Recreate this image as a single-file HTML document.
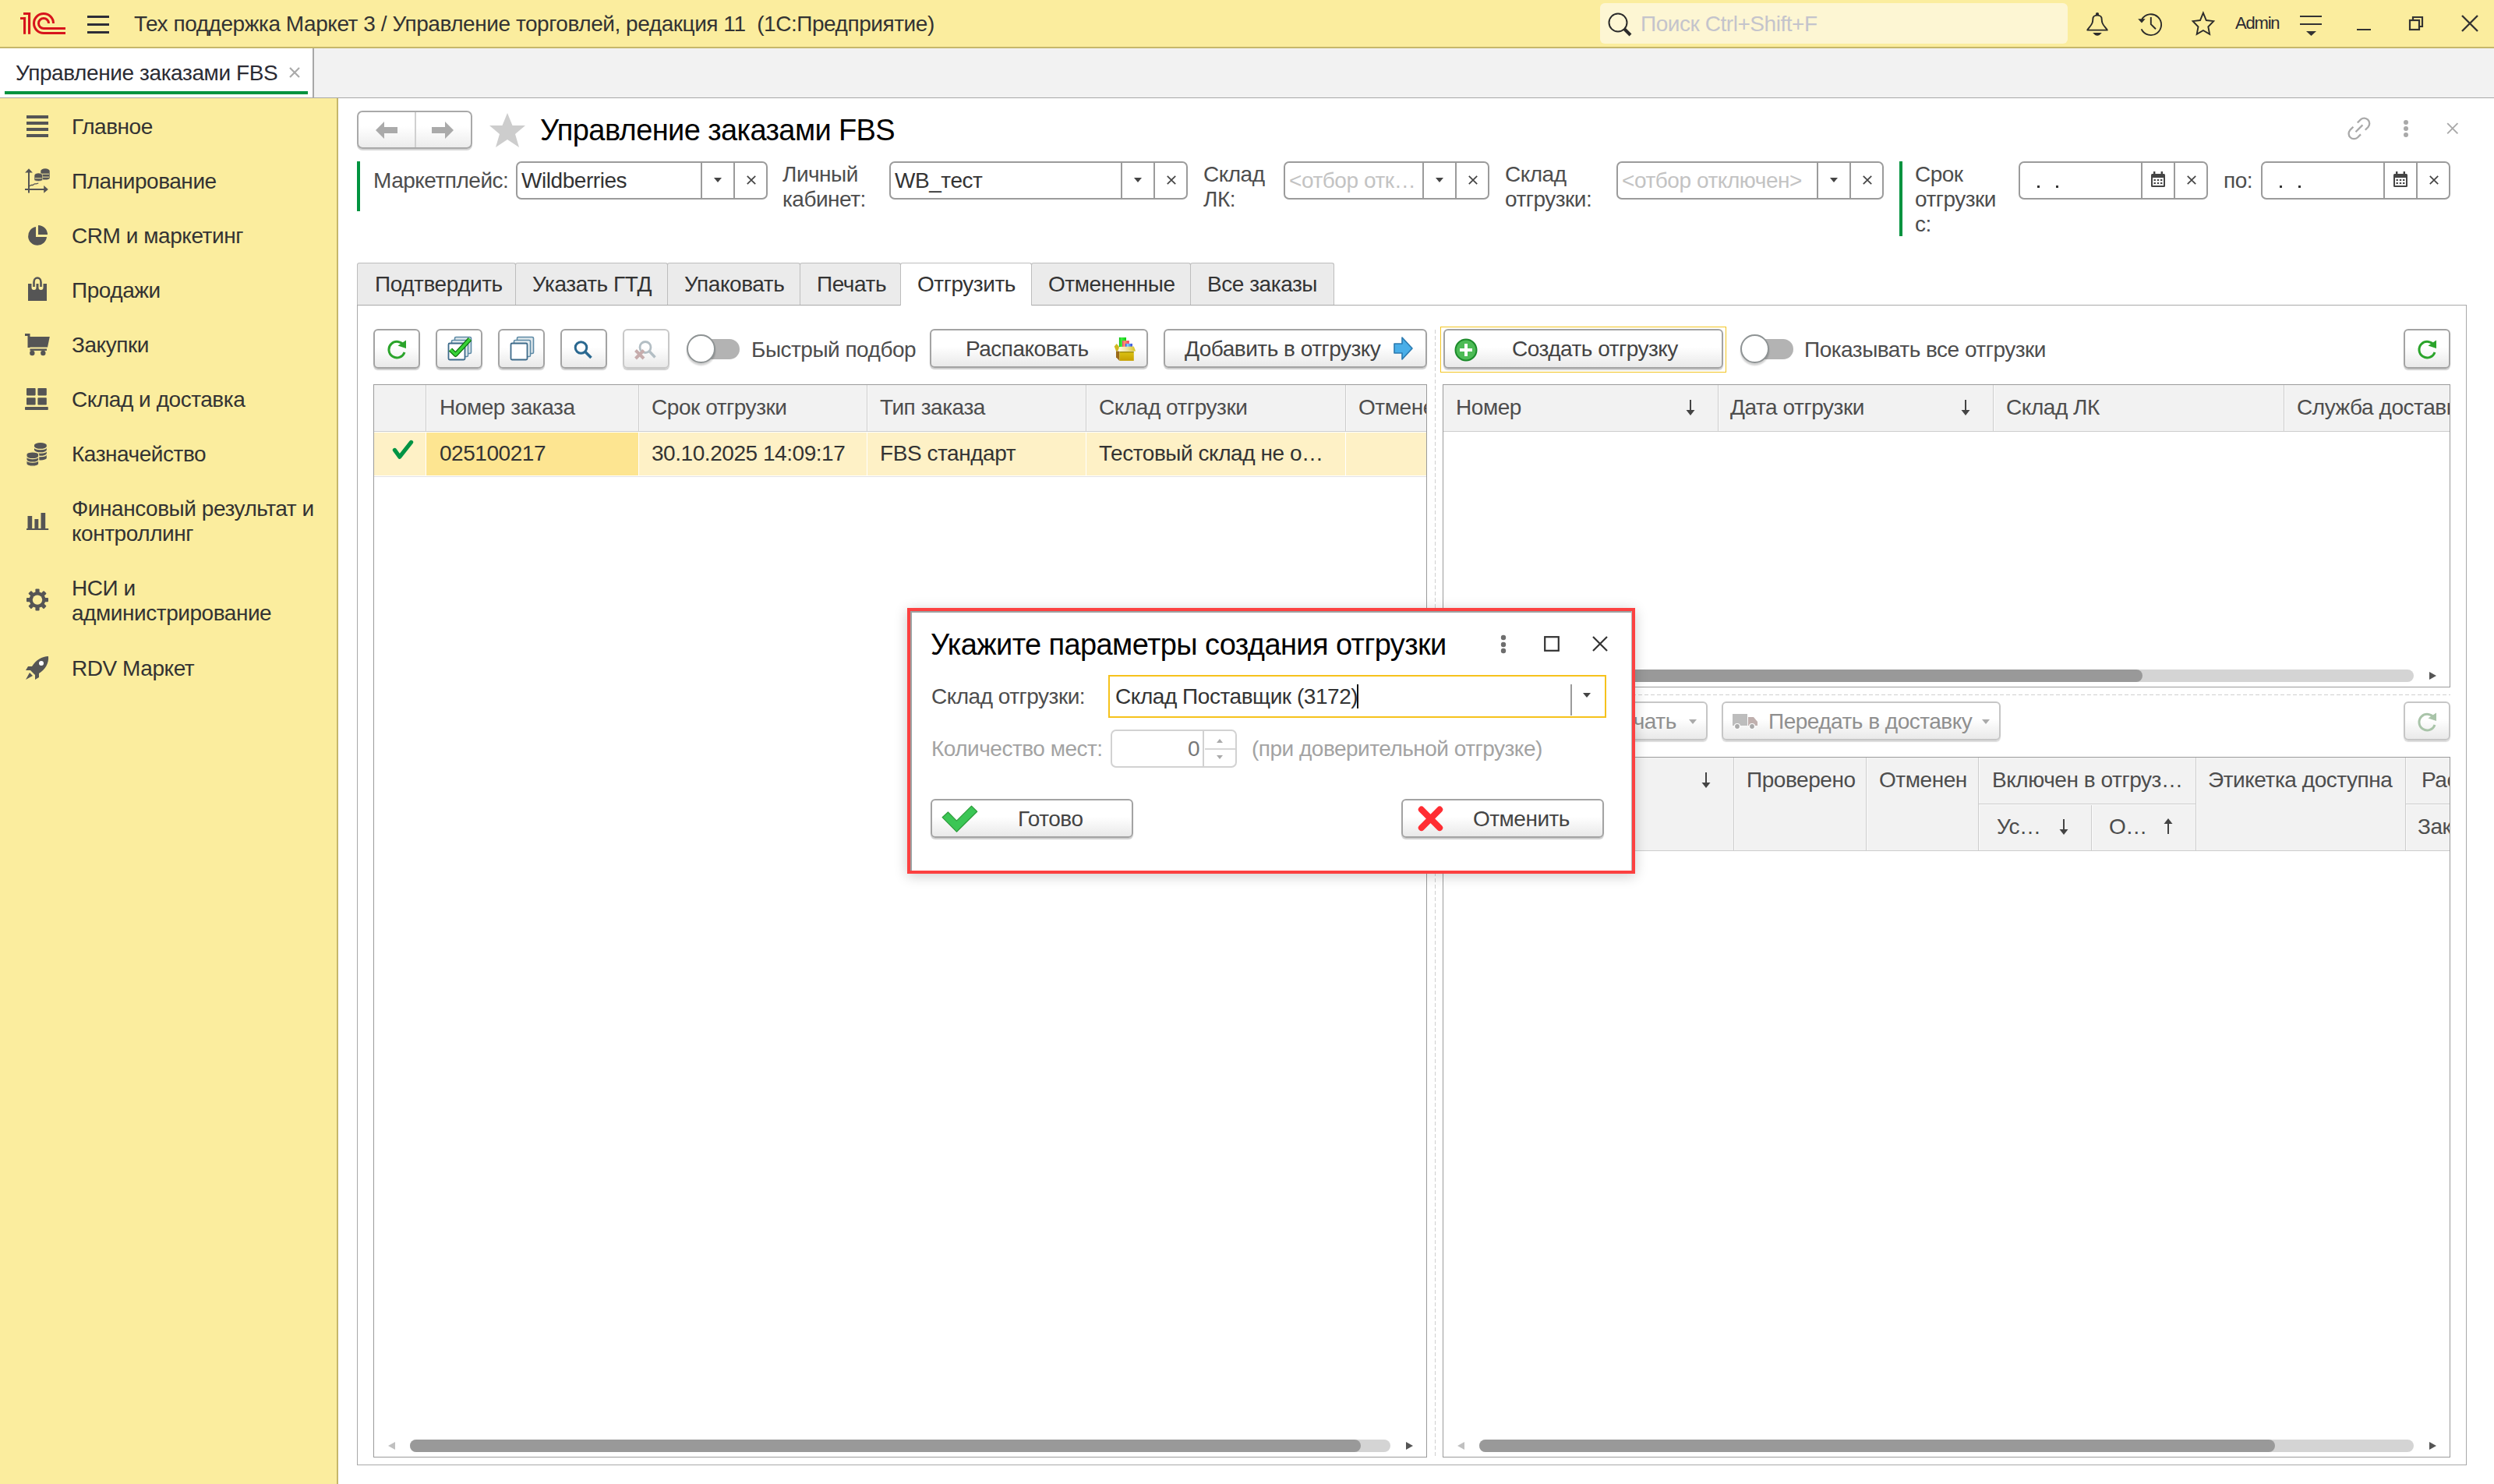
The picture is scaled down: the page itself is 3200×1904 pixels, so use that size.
<!DOCTYPE html>
<html><head><meta charset="utf-8">
<style>
*{box-sizing:border-box}
html,body{margin:0;padding:0}
body{width:3200px;height:1904px;overflow:hidden;position:relative;background:#fff;font-family:"Liberation Sans",sans-serif;color:#333}
.a{position:absolute}
.t{position:absolute;white-space:pre}
svg{position:absolute;overflow:visible}
</style></head><body>
<div class="a" style="left:0px;top:0px;width:3200px;height:60px;background:#fbed9e"></div>
<div class="a" style="left:0px;top:60px;width:3200px;height:2px;background:#c6b76b"></div>
<svg style="left:26px;top:16px" width="58" height="28" viewBox="0 0 58 28"><g fill="#d7141c"><rect x="4" y="0" width="9.1" height="3"/><rect x="10" y="0" width="3.1" height="27.8"/><rect x="4" y="6.1" width="3.05" height="21.7"/><rect x="0" y="6.1" width="7.05" height="2.9"/></g>
<g fill="none" stroke="#d7141c" stroke-width="3"><path d="M42.5 14 A12.5 12.5 0 1 0 30 26.5 L58 26.5"/><path d="M36.5 14 A6.5 6.5 0 1 0 30 20.5 L58 20.5"/></g></svg>
<div class="a" style="left:112px;top:20px;width:28px;height:2.5px;background:#2d2d37"></div>
<div class="a" style="left:112px;top:30px;width:28px;height:2.5px;background:#2d2d37"></div>
<div class="a" style="left:112px;top:40px;width:28px;height:2.5px;background:#2d2d37"></div>
<div class="t" style="left:172px;top:15px;font-size:28px;line-height:32px;letter-spacing:-0.45px;color:#333;">Тех поддержка Маркет 3 / Управление торговлей, редакция 11  (1С:Предприятие)</div>
<div class="a" style="left:2053px;top:4px;width:600px;height:52px;background:#fdf6d3;border-radius:6px"></div>
<svg style="left:2062px;top:16px" width="34" height="32" viewBox="0 0 34 32"><circle cx="14" cy="13" r="11.5" fill="none" stroke="#2b2b2b" stroke-width="2"/><path d="M22 21 L30 29" stroke="#2b2b2b" stroke-width="4"/></svg>
<div class="t" style="left:2105px;top:15px;font-size:28px;line-height:32px;letter-spacing:-0.45px;color:#c4c4cc;">Поиск Ctrl+Shift+F</div>
<svg style="left:2670px;top:8px" width="40" height="44" viewBox="0 0 40 44"><g transform="translate(-2670 -8)"><circle cx="2691" cy="18" r="2.1" fill="#2b2b2b"/>
<path d="M2678.2 38.6 C2679.5 35.8 2683 33.5 2684.5 29.5 C2685.5 27 2685.2 24.2 2685.6 22.6 C2686.4 20.6 2688.5 19.6 2691 19.6 C2693.5 19.6 2695.6 20.6 2696.4 22.6 C2696.8 24.2 2696.5 27 2697.5 29.5 C2699 33.5 2702.5 35.8 2703.8 38.6 Z" fill="none" stroke="#2b2b2b" stroke-width="1.9" stroke-linejoin="round"/>
<path d="M2685.2 42 L2696.8 42 L2693.8 45 Q2691 46.6 2688.2 45 Z" fill="#2b2b2b"/></g></svg>
<svg style="left:2740px;top:12px" width="40" height="40" viewBox="0 0 40 40"><g transform="translate(-2740 -12)"><path d="M2748.2 24.8 A13.4 13.4 0 1 1 2747.6 37.4" fill="none" stroke="#2b2b2b" stroke-width="1.9"/>
<path d="M2743.2 24.2 L2752.6 24.2 L2748 29.5 Z" fill="#2b2b2b"/>
<path d="M2759.8 22 L2759.8 31.2 L2766 37.2" fill="none" stroke="#2b2b2b" stroke-width="1.9"/></g></svg>
<svg style="left:2808px;top:12px" width="40" height="40" viewBox="0 0 40 40"><g transform="translate(-2808 -12)"><path d="M2826.9 16.6 L2830.8 26 L2840.2 27.1 L2833.3 34.3 L2835.1 43.8 L2826.9 39 L2818.7 43.8 L2820.5 34.3 L2813.6 27.1 L2823 26 Z" fill="none" stroke="#2b2b2b" stroke-width="1.9" stroke-linejoin="miter"/></g></svg>
<div class="t" style="left:2868px;top:14px;font-size:22px;line-height:32px;letter-spacing:-1.2px;color:#2b2b33;">Admin</div>
<div class="a" style="left:2951px;top:20px;width:28px;height:2px;background:#333"></div>
<div class="a" style="left:2951px;top:30px;width:28px;height:2px;background:#333"></div>
<svg style="left:2959px;top:40px" width="13" height="6" viewBox="0 0 13 6"><path d="M0 0 L13 0 L6.5 6 Z" fill="#333"/></svg>
<div class="a" style="left:3024px;top:37px;width:18px;height:2px;background:#333"></div>
<svg style="left:3091px;top:20px" width="20" height="20" viewBox="0 0 20 20"><rect x="1" y="6" width="12" height="12" fill="none" stroke="#333" stroke-width="2.2"/><path d="M5 6 L5 2 L17 2 L17 14 L13 14" fill="none" stroke="#333" stroke-width="2.2"/></svg>
<svg style="left:3158px;top:19px" width="22" height="22" viewBox="0 0 22 22"><path d="M1 1 L21 21 M21 1 L1 21" stroke="#333" stroke-width="2.4"/></svg>
<div class="a" style="left:0px;top:62px;width:3200px;height:63px;background:#f2f2f2"></div>
<div class="a" style="left:0px;top:125px;width:3200px;height:1px;background:#a8a8a8"></div>
<div class="a" style="left:0px;top:62px;width:401px;height:63px;background:#fff"></div>
<div class="a" style="left:401px;top:62px;width:2px;height:64px;background:#a8a8a8"></div>
<div class="a" style="left:6px;top:117px;width:389px;height:4px;background:#00933f"></div>
<div class="t" style="left:20px;top:78px;font-size:28px;line-height:32px;letter-spacing:-0.4px;color:#2b2b33;">Управление заказами FBS</div>
<svg style="left:371px;top:86px" width="14" height="14" viewBox="0 0 14 14"><path d="M1 1 L13 13 M13 1 L1 13" stroke="#aaa" stroke-width="2.2"/></svg>
<div class="a" style="left:0px;top:126px;width:432px;height:1778px;background:#fbed9e"></div>
<div class="a" style="left:432px;top:126px;width:2px;height:1778px;background:#c6b76b"></div>
<div class="t" style="left:92px;top:147px;font-size:28px;line-height:32px;letter-spacing:-0.45px;color:#333;">Главное</div>
<div class="t" style="left:92px;top:217px;font-size:28px;line-height:32px;letter-spacing:-0.45px;color:#333;">Планирование</div>
<div class="t" style="left:92px;top:287px;font-size:28px;line-height:32px;letter-spacing:-0.45px;color:#333;">CRM и маркетинг</div>
<div class="t" style="left:92px;top:357px;font-size:28px;line-height:32px;letter-spacing:-0.45px;color:#333;">Продажи</div>
<div class="t" style="left:92px;top:427px;font-size:28px;line-height:32px;letter-spacing:-0.45px;color:#333;">Закупки</div>
<div class="t" style="left:92px;top:497px;font-size:28px;line-height:32px;letter-spacing:-0.45px;color:#333;">Склад и доставка</div>
<div class="t" style="left:92px;top:567px;font-size:28px;line-height:32px;letter-spacing:-0.45px;color:#333;">Казначейство</div>
<div class="t" style="left:92px;top:637px;font-size:28px;line-height:32px;letter-spacing:-0.45px;color:#333;">Финансовый результат и</div>
<div class="t" style="left:92px;top:669px;font-size:28px;line-height:32px;letter-spacing:-0.45px;color:#333;">контроллинг</div>
<div class="t" style="left:92px;top:739px;font-size:28px;line-height:32px;letter-spacing:-0.45px;color:#333;">НСИ и</div>
<div class="t" style="left:92px;top:771px;font-size:28px;line-height:32px;letter-spacing:-0.45px;color:#333;">администрирование</div>
<div class="t" style="left:92px;top:842px;font-size:28px;line-height:32px;letter-spacing:-0.45px;color:#333;">RDV Маркет</div>
<div class="a" style="left:34px;top:148px;width:28px;height:4px;background:#555"></div>
<div class="a" style="left:34px;top:156px;width:28px;height:4px;background:#555"></div>
<div class="a" style="left:34px;top:164px;width:28px;height:4px;background:#555"></div>
<div class="a" style="left:34px;top:172px;width:28px;height:4px;background:#555"></div>
<svg style="left:25px;top:210px" width="50" height="50" viewBox="0 0 50 50"><g transform="translate(-25 -210)">
<rect x="36" y="219" width="2" height="28.5" fill="#555"/><path d="M32.1 221.6 L37 216.2 L41.9 221.6 Z" fill="#555"/>
<rect x="32" y="242" width="26" height="2" fill="#555"/><path d="M56.2 238 L61.8 243 L56.2 247.8 Z" fill="#555"/>
<path d="M37.5 239 L40 237.5 L42 237.5 L44.5 235.8 L46.5 235.8 L49.3 235" fill="none" stroke="#555" stroke-width="1.3"/>
<path d="M52.3 219.5 A5.7 3.3 0 0 1 63.7 219.5 L63.7 228.5 A5.7 2 0 0 1 52.3 228.5 Z" fill="#555"/>
<rect x="53" y="222.6" width="10" height="1.4" fill="#c9c08a"/><rect x="53" y="226.5" width="10" height="1.4" fill="#c9c08a"/>
<path d="M44 225 A5.3 3 0 0 1 54.6 225 L54.6 230.5 A5.3 2 0 0 1 44 230.5 Z" fill="#555" stroke="#fbed9e" stroke-width="0.6"/>
<rect x="45" y="228" width="8.6" height="1.4" fill="#c9c08a"/>
</g></svg>
<svg style="left:34px;top:288px" width="28" height="28" viewBox="0 0 28 28"><path d="M12 3 A12 12 0 1 0 26 16 L12 16 Z" fill="#555"/><path d="M15 1 A12 12 0 0 1 27 13 L15 13 Z" fill="#555"/></svg>
<svg style="left:0px;top:340px" width="70" height="60" viewBox="0 0 70 60"><g transform="translate(0 -340)"><path d="M36 364 L60 364 L60 386 L36 386 Z" fill="#555"/>
<path d="M43.5 369 L43.5 362 A4.5 5.5 0 0 1 52.5 362 L52.5 369" fill="none" stroke="#fbed9e" stroke-width="6" stroke-linecap="round"/>
<path d="M43.5 368 L43.5 362 A4.5 5.5 0 0 1 52.5 362 L52.5 368" fill="none" stroke="#555" stroke-width="2.6"/></g></svg>
<svg style="left:0px;top:420px" width="70" height="50" viewBox="0 0 70 50"><g transform="translate(0 -420)"><path d="M32 429.5 L37 429.5 L37 446" fill="none" stroke="#555" stroke-width="3"/>
<path d="M36 432 L63.8 432 L61 445.5 L36 445.5 Z" fill="#555"/>
<rect x="38.5" y="447.5" width="21.5" height="2.4" fill="#555"/>
<circle cx="41.3" cy="453" r="3.2" fill="#555"/><circle cx="55.3" cy="453" r="3.2" fill="#555"/></g></svg>
<svg style="left:25px;top:490px" width="50" height="50" viewBox="0 0 50 50"><g transform="translate(-25 -490)" fill="#555"><rect x="34" y="498" width="11.6" height="9.4" rx="0.8"/><rect x="48.4" y="498" width="11.4" height="9.4" rx="0.8"/><rect x="34" y="510.2" width="11.6" height="9.4" rx="0.8"/><rect x="48.4" y="510.2" width="11.4" height="9.4" rx="0.8"/><rect x="32" y="522" width="29.8" height="4" rx="0.8"/></g></svg>
<svg style="left:25px;top:560px" width="50" height="45" viewBox="0 0 50 45"><g transform="translate(-25 -560)"><path d="M44.0 571 A7.9 3 0 0 1 59.8 571 L59.8 587.5 A7.9 3 0 0 1 44.0 587.5 Z" fill="#555"/><path d="M44.0 573.5 A7.9 3 0 0 0 59.8 573.5" fill="none" stroke="#fbed9e" stroke-width="1.3"/><path d="M44.0 578 A7.9 3 0 0 0 59.8 578" fill="none" stroke="#fbed9e" stroke-width="1.3"/><path d="M44.0 582.5 A7.9 3 0 0 0 59.8 582.5" fill="none" stroke="#fbed9e" stroke-width="1.3"/><path d="M33.9 583 A7.9 3.2 0 0 1 49.7 583 L49.7 595 A7.9 3.2 0 0 1 33.9 595 Z" fill="#555" stroke="#fbed9e" stroke-width="1.2"/><path d="M33.9 585.5 A7.9 3.2 0 0 0 49.7 585.5" fill="none" stroke="#fbed9e" stroke-width="1.3"/><path d="M33.9 590 A7.9 3.2 0 0 0 49.7 590" fill="none" stroke="#fbed9e" stroke-width="1.3"/></g></svg>
<svg style="left:25px;top:650px" width="50" height="40" viewBox="0 0 50 40"><g transform="translate(-25 -650)" fill="#555"><rect x="35.5" y="662" width="5.7" height="16.5"/><rect x="44.4" y="666" width="4.9" height="12.5"/><rect x="52.5" y="658" width="5.7" height="20.5"/><rect x="34" y="678" width="28.2" height="2"/></g></svg>
<svg style="left:25px;top:750px" width="50" height="40" viewBox="0 0 50 40"><g transform="translate(23 19.6)"><circle r="10.4" fill="#555"/><rect x="-2.6" y="-14" width="5.2" height="6" rx="1" fill="#555" transform="rotate(0)"/><rect x="-2.6" y="-14" width="5.2" height="6" rx="1" fill="#555" transform="rotate(45)"/><rect x="-2.6" y="-14" width="5.2" height="6" rx="1" fill="#555" transform="rotate(90)"/><rect x="-2.6" y="-14" width="5.2" height="6" rx="1" fill="#555" transform="rotate(135)"/><rect x="-2.6" y="-14" width="5.2" height="6" rx="1" fill="#555" transform="rotate(180)"/><rect x="-2.6" y="-14" width="5.2" height="6" rx="1" fill="#555" transform="rotate(225)"/><rect x="-2.6" y="-14" width="5.2" height="6" rx="1" fill="#555" transform="rotate(270)"/><rect x="-2.6" y="-14" width="5.2" height="6" rx="1" fill="#555" transform="rotate(315)"/><circle r="6.2" fill="#fbed9e"/></g></svg>
<svg style="left:32px;top:841px" width="32" height="32" viewBox="0 0 32 32"><path d="M30 1 C22 1 14 6 9 14 L4 14 L1 19 L7 19 L13 25 L13 31 L18 28 L18 23 C26 18 31 10 30 1 Z" fill="#555"/><circle cx="21" cy="10" r="3" fill="#fff"/><path d="M6 22 L1 31 L10 26 Z" fill="#555"/></svg>
<div class="a" style="left:458px;top:142px;width:148px;height:49px;border:2px solid #a9a9a9;border-radius:7px;background:linear-gradient(#fff 40%,#ececec);box-shadow:0 2px 0 #d5d5d5"></div>
<div class="a" style="left:532px;top:144px;width:2px;height:45px;background:#d0d0d0"></div>
<svg style="left:482px;top:156px" width="28" height="22" viewBox="0 0 28 22"><path d="M0 11 L11 0 L11 7 L28 7 L28 15 L11 15 L11 22 Z" fill="#aaa"/></svg>
<svg style="left:554px;top:156px" width="28" height="22" viewBox="0 0 28 22"><path d="M28 11 L17 0 L17 7 L0 7 L0 15 L17 15 L17 22 Z" fill="#aaa"/></svg>
<svg style="left:628px;top:145px" width="46" height="44" viewBox="0 0 46 44"><path d="M23 0 L29.5 16 L46 16 L33 27 L38 44 L23 34 L8 44 L13 27 L0 16 L16.5 16 Z" fill="#cdcdcd"/></svg>
<div class="t" style="left:693px;top:145px;font-size:38px;line-height:44px;letter-spacing:-0.6px;color:#000;">Управление заказами FBS</div>
<svg style="left:3000px;top:140px" width="60" height="50" viewBox="0 0 60 50"><g transform="translate(-3000 -140)" fill="none" stroke="#a9a9a9" stroke-width="2.3"><path d="M3024.8 157.5 L3028.9 153.4 A6.8 6.8 0 0 1 3038.5 163 L3034.8 166.7"/><path d="M3019.4 162.8 L3015.3 166.9 A6.8 6.8 0 0 0 3024.9 176.5 L3029 172.4"/><path d="M3022.5 169.3 L3031.4 160.4"/></g></svg>
<svg style="left:3075px;top:148px" width="24" height="34" viewBox="0 0 24 34"><g transform="translate(-3075 -148)" fill="#a9a9a9"><circle cx="3087" cy="157" r="3"/><circle cx="3087" cy="165" r="3"/><circle cx="3087" cy="173" r="3"/></g></svg>
<svg style="left:3139px;top:157px" width="16" height="16" viewBox="0 0 16 16"><path d="M1.2 1.2 L14.4 14.4 M14.4 1.2 L1.2 14.4" stroke="#a9a9a9" stroke-width="1.9"/></svg>
<div class="a" style="left:458px;top:207px;width:4px;height:64px;background:#00933f"></div>
<div class="a" style="left:2437px;top:207px;width:4px;height:96px;background:#00933f"></div>
<div class="t" style="left:479px;top:216px;font-size:28px;line-height:32px;letter-spacing:-0.5px;color:#4d4d4d;">Маркетплейс:</div>
<div class="a" style="left:662px;top:207px;width:323px;height:49px;border:2px solid #9b9b9b;border-radius:7px;background:#fff"></div>
<div class="a" style="left:899px;top:209px;width:2px;height:45px;background:#9b9b9b"></div>
<div class="a" style="left:941px;top:209px;width:2px;height:45px;background:#9b9b9b"></div>
<div class="t" style="left:669px;top:216px;font-size:28px;line-height:32px;letter-spacing:-0.45px;color:#333;">Wildberries</div>
<svg style="left:916.0px;top:228px" width="10" height="7" viewBox="0 0 10 7"><path d="M0 0 L10 0 L5 6 Z" fill="#444"/></svg>
<svg style="left:957.5px;top:225px" width="12" height="12" viewBox="0 0 12 12"><path d="M0.8 0.8 L11.2 11.2 M11.2 0.8 L0.8 11.2" stroke="#444" stroke-width="1.7"/></svg>
<div class="t" style="left:1004px;top:208px;font-size:28px;line-height:32px;letter-spacing:-0.5px;color:#4d4d4d;">Личный</div>
<div class="t" style="left:1004px;top:240px;font-size:28px;line-height:32px;letter-spacing:-0.5px;color:#4d4d4d;">кабинет:</div>
<div class="a" style="left:1141px;top:207px;width:383px;height:49px;border:2px solid #9b9b9b;border-radius:7px;background:#fff"></div>
<div class="a" style="left:1438px;top:209px;width:2px;height:45px;background:#9b9b9b"></div>
<div class="a" style="left:1480px;top:209px;width:2px;height:45px;background:#9b9b9b"></div>
<div class="t" style="left:1148px;top:216px;font-size:28px;line-height:32px;letter-spacing:-0.45px;color:#333;">WB_тест</div>
<svg style="left:1455.0px;top:228px" width="10" height="7" viewBox="0 0 10 7"><path d="M0 0 L10 0 L5 6 Z" fill="#444"/></svg>
<svg style="left:1496.5px;top:225px" width="12" height="12" viewBox="0 0 12 12"><path d="M0.8 0.8 L11.2 11.2 M11.2 0.8 L0.8 11.2" stroke="#444" stroke-width="1.7"/></svg>
<div class="t" style="left:1544px;top:208px;font-size:28px;line-height:32px;letter-spacing:-0.5px;color:#4d4d4d;">Склад</div>
<div class="t" style="left:1544px;top:240px;font-size:28px;line-height:32px;letter-spacing:-0.5px;color:#4d4d4d;">ЛК:</div>
<div class="a" style="left:1647px;top:207px;width:264px;height:49px;border:2px solid #9b9b9b;border-radius:7px;background:#fff"></div>
<div class="a" style="left:1825px;top:209px;width:2px;height:45px;background:#9b9b9b"></div>
<div class="a" style="left:1867px;top:209px;width:2px;height:45px;background:#9b9b9b"></div>
<div class="t" style="left:1654px;top:216px;font-size:28px;line-height:32px;letter-spacing:-0.45px;color:#c3c3c3;">&lt;отбор отк…</div>
<svg style="left:1842.0px;top:228px" width="10" height="7" viewBox="0 0 10 7"><path d="M0 0 L10 0 L5 6 Z" fill="#444"/></svg>
<svg style="left:1883.5px;top:225px" width="12" height="12" viewBox="0 0 12 12"><path d="M0.8 0.8 L11.2 11.2 M11.2 0.8 L0.8 11.2" stroke="#444" stroke-width="1.7"/></svg>
<div class="t" style="left:1931px;top:208px;font-size:28px;line-height:32px;letter-spacing:-0.5px;color:#4d4d4d;">Склад</div>
<div class="t" style="left:1931px;top:240px;font-size:28px;line-height:32px;letter-spacing:-0.5px;color:#4d4d4d;">отгрузки:</div>
<div class="a" style="left:2074px;top:207px;width:343px;height:49px;border:2px solid #9b9b9b;border-radius:7px;background:#fff"></div>
<div class="a" style="left:2331px;top:209px;width:2px;height:45px;background:#9b9b9b"></div>
<div class="a" style="left:2373px;top:209px;width:2px;height:45px;background:#9b9b9b"></div>
<div class="t" style="left:2081px;top:216px;font-size:28px;line-height:32px;letter-spacing:-0.45px;color:#c3c3c3;">&lt;отбор отключен&gt;</div>
<svg style="left:2348.0px;top:228px" width="10" height="7" viewBox="0 0 10 7"><path d="M0 0 L10 0 L5 6 Z" fill="#444"/></svg>
<svg style="left:2389.5px;top:225px" width="12" height="12" viewBox="0 0 12 12"><path d="M0.8 0.8 L11.2 11.2 M11.2 0.8 L0.8 11.2" stroke="#444" stroke-width="1.7"/></svg>
<div class="t" style="left:2457px;top:208px;font-size:28px;line-height:32px;letter-spacing:-0.5px;color:#4d4d4d;">Срок</div>
<div class="t" style="left:2457px;top:240px;font-size:28px;line-height:32px;letter-spacing:-0.5px;color:#4d4d4d;">отгрузки</div>
<div class="t" style="left:2457px;top:272px;font-size:28px;line-height:32px;letter-spacing:-0.5px;color:#4d4d4d;">с:</div>
<div class="a" style="left:2590px;top:207px;width:243px;height:49px;border:2px solid #9b9b9b;border-radius:7px;background:#fff"></div>
<div class="a" style="left:2747px;top:209px;width:2px;height:45px;background:#9b9b9b"></div>
<div class="a" style="left:2789px;top:209px;width:2px;height:45px;background:#9b9b9b"></div>
<svg style="left:2760.0px;top:220px" width="18" height="20" viewBox="0 0 18 20"><g fill="#444"><rect x="0" y="3" width="18" height="17" rx="1.5"/></g><rect x="2" y="8" width="14" height="10" fill="#fff"/><g fill="#444"><rect x="3" y="0" width="2.4" height="5"/><rect x="12.6" y="0" width="2.4" height="5"/><rect x="3.5" y="10" width="2.4" height="2"/><rect x="7.8" y="10" width="2.4" height="2"/><rect x="12" y="10" width="2.4" height="2"/><rect x="3.5" y="14" width="2.4" height="2"/><rect x="7.8" y="14" width="2.4" height="2"/><rect x="12" y="14" width="2.4" height="2"/></g></svg>
<svg style="left:2805.5px;top:225px" width="12" height="12" viewBox="0 0 12 12"><path d="M0.8 0.8 L11.2 11.2 M11.2 0.8 L0.8 11.2" stroke="#444" stroke-width="1.7"/></svg>
<div class="a" style="left:2614px;top:238px;width:3px;height:3px;background:#333"></div>
<div class="a" style="left:2638px;top:238px;width:3px;height:3px;background:#333"></div>
<div class="t" style="left:2853px;top:216px;font-size:28px;line-height:32px;letter-spacing:-0.5px;color:#4d4d4d;">по:</div>
<div class="a" style="left:2901px;top:207px;width:243px;height:49px;border:2px solid #9b9b9b;border-radius:7px;background:#fff"></div>
<div class="a" style="left:3058px;top:209px;width:2px;height:45px;background:#9b9b9b"></div>
<div class="a" style="left:3100px;top:209px;width:2px;height:45px;background:#9b9b9b"></div>
<svg style="left:3071.0px;top:220px" width="18" height="20" viewBox="0 0 18 20"><g fill="#444"><rect x="0" y="3" width="18" height="17" rx="1.5"/></g><rect x="2" y="8" width="14" height="10" fill="#fff"/><g fill="#444"><rect x="3" y="0" width="2.4" height="5"/><rect x="12.6" y="0" width="2.4" height="5"/><rect x="3.5" y="10" width="2.4" height="2"/><rect x="7.8" y="10" width="2.4" height="2"/><rect x="12" y="10" width="2.4" height="2"/><rect x="3.5" y="14" width="2.4" height="2"/><rect x="7.8" y="14" width="2.4" height="2"/><rect x="12" y="14" width="2.4" height="2"/></g></svg>
<svg style="left:3116.5px;top:225px" width="12" height="12" viewBox="0 0 12 12"><path d="M0.8 0.8 L11.2 11.2 M11.2 0.8 L0.8 11.2" stroke="#444" stroke-width="1.7"/></svg>
<div class="a" style="left:2925px;top:238px;width:3px;height:3px;background:#333"></div>
<div class="a" style="left:2949px;top:238px;width:3px;height:3px;background:#333"></div>
<div class="a" style="left:458px;top:391px;width:2707px;height:1489px;border:1px solid #a9a9a9;background:#fff"></div>
<div class="a" style="left:458px;top:337px;width:204px;height:54px;border:1px solid #bdbdbd;border-bottom:none;border-radius:3px 3px 0 0;background:#ebebeb"></div>
<div class="t" style="left:481px;top:349px;font-size:28px;line-height:32px;letter-spacing:-0.45px;color:#333;">Подтвердить</div>
<div class="a" style="left:661px;top:337px;width:196px;height:54px;border:1px solid #bdbdbd;border-bottom:none;border-radius:3px 3px 0 0;background:#ebebeb"></div>
<div class="t" style="left:683px;top:349px;font-size:28px;line-height:32px;letter-spacing:-0.45px;color:#333;">Указать ГТД</div>
<div class="a" style="left:856px;top:337px;width:171px;height:54px;border:1px solid #bdbdbd;border-bottom:none;border-radius:3px 3px 0 0;background:#ebebeb"></div>
<div class="t" style="left:878px;top:349px;font-size:28px;line-height:32px;letter-spacing:-0.45px;color:#333;">Упаковать</div>
<div class="a" style="left:1026px;top:337px;width:130px;height:54px;border:1px solid #bdbdbd;border-bottom:none;border-radius:3px 3px 0 0;background:#ebebeb"></div>
<div class="t" style="left:1048px;top:349px;font-size:28px;line-height:32px;letter-spacing:-0.45px;color:#333;">Печать</div>
<div class="a" style="left:1155px;top:337px;width:169px;height:55px;border:1px solid #bdbdbd;border-bottom:none;border-radius:3px 3px 0 0;background:#fff"></div>
<div class="t" style="left:1177px;top:349px;font-size:28px;line-height:32px;letter-spacing:-0.45px;color:#333;">Отгрузить</div>
<div class="a" style="left:1323px;top:337px;width:205px;height:54px;border:1px solid #bdbdbd;border-bottom:none;border-radius:3px 3px 0 0;background:#ebebeb"></div>
<div class="t" style="left:1345px;top:349px;font-size:28px;line-height:32px;letter-spacing:-0.45px;color:#333;">Отмененные</div>
<div class="a" style="left:1527px;top:337px;width:185px;height:54px;border:1px solid #bdbdbd;border-bottom:none;border-radius:3px 3px 0 0;background:#ebebeb"></div>
<div class="t" style="left:1549px;top:349px;font-size:28px;line-height:32px;letter-spacing:-0.45px;color:#333;">Все заказы</div>
<div class="a" style="left:479px;top:422px;width:60px;height:51px;border:2px solid #a3a3a3;border-radius:6px;background:linear-gradient(#fff 45%,#e9e9e9);box-shadow:0 2px 1px #cfcfcf;"></div>
<div class="a" style="left:559px;top:422px;width:60px;height:51px;border:2px solid #a3a3a3;border-radius:6px;background:linear-gradient(#fff 45%,#e9e9e9);box-shadow:0 2px 1px #cfcfcf;"></div>
<div class="a" style="left:639px;top:422px;width:60px;height:51px;border:2px solid #a3a3a3;border-radius:6px;background:linear-gradient(#fff 45%,#e9e9e9);box-shadow:0 2px 1px #cfcfcf;"></div>
<div class="a" style="left:719px;top:422px;width:60px;height:51px;border:2px solid #a3a3a3;border-radius:6px;background:linear-gradient(#fff 45%,#e9e9e9);box-shadow:0 2px 1px #cfcfcf;"></div>
<div class="a" style="left:799px;top:422px;width:60px;height:51px;border:2px solid #a3a3a3;border-radius:6px;background:linear-gradient(#fff 45%,#e9e9e9);box-shadow:0 2px 1px #cfcfcf;border-color:#c8c8c8"></div>
<svg style="left:496px;top:435px" width="26" height="26" viewBox="0 0 26 26"><path d="M22.2 8.5 A10.3 10.3 0 1 0 23 17" fill="none" stroke="#2ba42b" stroke-width="3"/><path d="M14.5 8.5 L25 1.5 L25 12 Z" fill="#2ba42b"/></svg>
<svg style="left:570px;top:428px" width="40" height="40" viewBox="0 0 40 40"><g transform="translate(-570 -428)">
<rect x="583.5" y="432.5" width="21" height="21" rx="1.5" fill="#dde6ea" stroke="#5d8aa6" stroke-width="1.6"/>
<rect x="579.5" y="436.5" width="21" height="21" rx="1.5" fill="#e6eef1" stroke="#5d8aa6" stroke-width="1.6"/>
<rect x="575.5" y="440.5" width="21" height="21" rx="1.5" fill="#fff" stroke="#3e6b8a" stroke-width="1.8"/>
<path d="M578 448.5 L584.5 455 L603 435" fill="none" stroke="#0e6e0e" stroke-width="6" stroke-linejoin="round"/>
<path d="M578 448.5 L584.5 455 L603 435" fill="none" stroke="#38d238" stroke-width="3.4" stroke-linejoin="round"/>
</g></svg>
<svg style="left:650px;top:428px" width="40" height="40" viewBox="0 0 40 40"><g transform="translate(-650 -428)">
<rect x="663.5" y="432.5" width="21" height="21" rx="1.5" fill="#dde6ea" stroke="#5d8aa6" stroke-width="1.6"/>
<rect x="659.5" y="436.5" width="21" height="21" rx="1.5" fill="#e6eef1" stroke="#5d8aa6" stroke-width="1.6"/>
<rect x="655.5" y="440.5" width="21" height="21" rx="1.5" fill="#fff" stroke="#3e6b8a" stroke-width="1.8"/>
</g></svg>
<svg style="left:730px;top:430px" width="40" height="40" viewBox="0 0 40 40"><g transform="translate(-730 -430)"><circle cx="745.5" cy="446" r="7.3" fill="none" stroke="#2a6890" stroke-width="3"/><path d="M750.5 451 L758.5 459" stroke="#2a6890" stroke-width="3.6"/></g></svg>
<svg style="left:810px;top:430px" width="40" height="40" viewBox="0 0 40 40"><g transform="translate(-810 -430)"><circle cx="828" cy="445.5" r="7" fill="none" stroke="#b3bec4" stroke-width="2.8"/><path d="M833 450.5 L840.5 458.5" stroke="#b3bec4" stroke-width="3.4"/><path d="M815.5 449.5 L826 460 M826 449.5 L815.5 460" stroke="#c6acac" stroke-width="4"/></g></svg>
<div class="a" style="left:890px;top:435px;width:59px;height:26px;background:#b3b3b3;border-radius:13px"></div>
<div class="a" style="left:881px;top:429px;width:37px;height:37px;background:#fff;border:2px solid #8e9394;border-radius:50%;box-shadow:0 3px 2px rgba(0,0,0,0.18)"></div>
<div class="t" style="left:964px;top:433px;font-size:28px;line-height:32px;letter-spacing:-0.5px;color:#4d4d4d;">Быстрый подбор</div>
<div class="a" style="left:1193px;top:422px;width:280px;height:50px;border:2px solid #a3a3a3;border-radius:6px;background:linear-gradient(#fff 45%,#e9e9e9);box-shadow:0 2px 1px #cfcfcf;"></div>
<div class="t" style="left:1239px;top:432px;font-size:28px;line-height:32px;letter-spacing:-0.5px;color:#444;">Распаковать</div>
<svg style="left:1420px;top:425px" width="50" height="45" viewBox="0 0 50 45"><defs><linearGradient id="bg1" x1="0" x2="1"><stop offset="0" stop-color="#08b808"/><stop offset="0.3" stop-color="#44f044"/><stop offset="1" stop-color="#10c810"/></linearGradient>
<linearGradient id="bg2" x1="0" x2="1"><stop offset="0" stop-color="#f03a7a"/><stop offset="0.3" stop-color="#ff9a6a"/><stop offset="1" stop-color="#f03a60"/></linearGradient>
<linearGradient id="bg3" x1="0" x2="1"><stop offset="0" stop-color="#3040e0"/><stop offset="0.3" stop-color="#80d8ff"/><stop offset="1" stop-color="#3040d8"/></linearGradient>
<linearGradient id="bg4" x1="0" x2="1"><stop offset="0" stop-color="#fffbe0"/><stop offset="0.5" stop-color="#efe49a"/><stop offset="1" stop-color="#d6c21c"/></linearGradient>
<linearGradient id="bg5" x1="0" x2="0" y1="0" y2="1"><stop offset="0" stop-color="#8a7a10"/><stop offset="0.2" stop-color="#d8be10"/><stop offset="1" stop-color="#c6a000"/></linearGradient></defs>
<g transform="translate(-1420 -425)">
<rect x="1435.9" y="432.9" width="9.1" height="12.2" fill="url(#bg1)"/>
<rect x="1440" y="437" width="8.8" height="8.1" fill="url(#bg2)"/>
<rect x="1443.9" y="440.9" width="9" height="4.2" fill="url(#bg3)"/>
<path d="M1432 450.2 L1436.4 450.8 L1436.4 462.9 L1432 458.3 Z" fill="#9a6a18"/>
<path d="M1436.4 450.8 L1454.8 450.8 L1454.8 462.9 L1436.4 462.9 Z" fill="url(#bg5)"/>
<path d="M1429.7 444.4 L1432.7 441.1 L1436.5 445.5 L1434.2 450.2 L1432 450.2 Z" fill="#d0b820"/>
<path d="M1435.8 445 L1454.8 444.4 L1457.1 450.5 L1435.8 450.8 Z" fill="url(#bg4)"/>
</g></svg>
<div class="a" style="left:1493px;top:422px;width:338px;height:50px;border:2px solid #a3a3a3;border-radius:6px;background:linear-gradient(#fff 45%,#e9e9e9);box-shadow:0 2px 1px #cfcfcf;"></div>
<div class="t" style="left:1520px;top:432px;font-size:28px;line-height:32px;letter-spacing:-0.5px;color:#444;">Добавить в отгрузку</div>
<svg style="left:1788px;top:432px" width="26" height="30" viewBox="0 0 26 30"><path d="M1 9 L11 9 L11 1 L24 15 L11 29 L11 21 L1 21 Z" fill="#49aee8" stroke="#2a7ab0" stroke-width="1.6" stroke-linejoin="round"/></svg>
<div class="a" style="left:1841px;top:420px;width:1px;height:1450px;background:repeating-linear-gradient(#fff 0 3px,#cfcfcf 3px 8px)"></div>
<div class="a" style="left:1848px;top:419px;width:367px;height:59px;border:1.5px solid #f2c524"></div>
<div class="a" style="left:1852px;top:422px;width:359px;height:51px;border:2px solid #a3a3a3;border-radius:6px;background:linear-gradient(#fff 45%,#e9e9e9);box-shadow:0 2px 1px #cfcfcf;"></div>
<svg style="left:1866px;top:434px" width="30" height="30" viewBox="0 0 30 30"><circle cx="15" cy="15" r="13.5" fill="#4cbb55" stroke="#1b8a2a" stroke-width="2"/><path d="M15 7 L15 23 M7 15 L23 15" stroke="#fff" stroke-width="4"/></svg>
<div class="t" style="left:1940px;top:432px;font-size:28px;line-height:32px;letter-spacing:-0.5px;color:#444;">Создать отгрузку</div>
<div class="a" style="left:2242px;top:435px;width:59px;height:26px;background:#b3b3b3;border-radius:13px"></div>
<div class="a" style="left:2233px;top:429px;width:37px;height:37px;background:#fff;border:2px solid #8e9394;border-radius:50%;box-shadow:0 3px 2px rgba(0,0,0,0.18)"></div>
<div class="t" style="left:2315px;top:433px;font-size:28px;line-height:32px;letter-spacing:-0.5px;color:#4d4d4d;">Показывать все отгрузки</div>
<div class="a" style="left:3084px;top:422px;width:60px;height:51px;border:2px solid #a3a3a3;border-radius:6px;background:linear-gradient(#fff 45%,#e9e9e9);box-shadow:0 2px 1px #cfcfcf;"></div>
<svg style="left:3101px;top:435px" width="26" height="26" viewBox="0 0 26 26"><path d="M22.2 8.5 A10.3 10.3 0 1 0 23 17" fill="none" stroke="#2ba42b" stroke-width="3"/><path d="M14.5 8.5 L25 1.5 L25 12 Z" fill="#2ba42b"/></svg>
<div class="a" style="left:479px;top:493px;width:1352px;height:1377px;border:1px solid #9b9b9b;background:#fff"></div>
<div class="a" style="left:480px;top:494px;width:1350px;height:59px;background:#f2f2f2"></div>
<div class="a" style="left:480px;top:553px;width:1350px;height:1px;background:#cdcdcd"></div>
<div class="a" style="left:546px;top:494px;width:1px;height:59px;background:#cdcdcd"></div>
<div class="a" style="left:547px;top:494px;width:1px;height:59px;background:#fafafa"></div>
<div class="a" style="left:819px;top:494px;width:1px;height:59px;background:#cdcdcd"></div>
<div class="a" style="left:820px;top:494px;width:1px;height:59px;background:#fafafa"></div>
<div class="a" style="left:1112px;top:494px;width:1px;height:59px;background:#cdcdcd"></div>
<div class="a" style="left:1113px;top:494px;width:1px;height:59px;background:#fafafa"></div>
<div class="a" style="left:1393px;top:494px;width:1px;height:59px;background:#cdcdcd"></div>
<div class="a" style="left:1394px;top:494px;width:1px;height:59px;background:#fafafa"></div>
<div class="a" style="left:1726px;top:494px;width:1px;height:59px;background:#cdcdcd"></div>
<div class="a" style="left:1727px;top:494px;width:1px;height:59px;background:#fafafa"></div>
<div class="a" style="left:480px;top:555px;width:1350px;height:55px;background:#fef1c6"></div>
<div class="a" style="left:547px;top:555px;width:272px;height:55px;background:#fde591"></div>
<div class="a" style="left:546px;top:555px;width:1px;height:55px;background:#fff"></div>
<div class="a" style="left:819px;top:555px;width:1px;height:55px;background:#fff"></div>
<div class="a" style="left:1112px;top:555px;width:1px;height:55px;background:#fff"></div>
<div class="a" style="left:1393px;top:555px;width:1px;height:55px;background:#fff"></div>
<div class="a" style="left:1726px;top:555px;width:1px;height:55px;background:#fff"></div>
<div class="a" style="left:480px;top:611px;width:1350px;height:1px;background:#e3e3e3"></div>
<svg style="left:498px;top:560px" width="36" height="34" viewBox="0 0 36 34"><g transform="translate(-498 -560)"><path d="M506.4 577.4 L512.8 586.2 L527.6 567.4" fill="none" stroke="#009444" stroke-width="5.2" stroke-linecap="round" stroke-linejoin="round"/></g></svg>
<div class="t" style="left:564px;top:507px;font-size:28px;line-height:32px;letter-spacing:-0.45px;color:#4d4d4d;">Номер заказа</div>
<div class="t" style="left:564px;top:566px;font-size:28px;line-height:32px;letter-spacing:-0.45px;color:#333;">025100217</div>
<div class="t" style="left:836px;top:507px;font-size:28px;line-height:32px;letter-spacing:-0.45px;color:#4d4d4d;">Срок отгрузки</div>
<div class="t" style="left:836px;top:566px;font-size:28px;line-height:32px;letter-spacing:-0.45px;color:#333;">30.10.2025 14:09:17</div>
<div class="t" style="left:1129px;top:507px;font-size:28px;line-height:32px;letter-spacing:-0.45px;color:#4d4d4d;">Тип заказа</div>
<div class="t" style="left:1129px;top:566px;font-size:28px;line-height:32px;letter-spacing:-0.45px;color:#333;">FBS стандарт</div>
<div class="t" style="left:1410px;top:507px;font-size:28px;line-height:32px;letter-spacing:-0.45px;color:#4d4d4d;">Склад отгрузки</div>
<div class="t" style="left:1410px;top:566px;font-size:28px;line-height:32px;letter-spacing:-0.45px;color:#333;">Тестовый склад не о…</div>
<div class="a" style="left:1727px;top:494px;width:103px;height:59px;overflow:hidden">
<div class="t" style="left:16px;top:13px;font-size:28px;line-height:32px;letter-spacing:-0.45px;color:#4d4d4d;">Отменен</div>
</div>
<svg style="left:498px;top:1850px" width="9" height="10" viewBox="0 0 9 10"><path d="M9 0 L9 10 L0 5 Z" fill="#c0c0c0"/></svg>
<div class="a" style="left:526px;top:1847px;width:1258px;height:16px;background:#d4d4d4;border-radius:8px"></div>
<div class="a" style="left:526px;top:1847px;width:1220px;height:16px;background:#999;border-radius:8px"></div>
<svg style="left:1804px;top:1850px" width="9" height="10" viewBox="0 0 9 10"><path d="M0 0 L0 10 L9 5 Z" fill="#555"/></svg>
<div class="a" style="left:1851px;top:493px;width:1293px;height:389px;border:1px solid #9b9b9b;background:#fff"></div>
<div class="a" style="left:1852px;top:494px;width:1291px;height:59px;background:#f2f2f2"></div>
<div class="a" style="left:1852px;top:553px;width:1291px;height:1px;background:#cdcdcd"></div>
<div class="a" style="left:2204px;top:494px;width:1px;height:59px;background:#cdcdcd"></div>
<div class="a" style="left:2205px;top:494px;width:1px;height:59px;background:#fafafa"></div>
<div class="a" style="left:2557px;top:494px;width:1px;height:59px;background:#cdcdcd"></div>
<div class="a" style="left:2558px;top:494px;width:1px;height:59px;background:#fafafa"></div>
<div class="a" style="left:2930px;top:494px;width:1px;height:59px;background:#cdcdcd"></div>
<div class="a" style="left:2931px;top:494px;width:1px;height:59px;background:#fafafa"></div>
<div class="t" style="left:1868px;top:507px;font-size:28px;line-height:32px;letter-spacing:-0.45px;color:#4d4d4d;">Номер</div>
<div class="t" style="left:2220px;top:507px;font-size:28px;line-height:32px;letter-spacing:-0.45px;color:#4d4d4d;">Дата отгрузки</div>
<div class="t" style="left:2574px;top:507px;font-size:28px;line-height:32px;letter-spacing:-0.45px;color:#4d4d4d;">Склад ЛК</div>
<div class="a" style="left:2931px;top:494px;width:212px;height:59px;overflow:hidden">
<div class="t" style="left:16px;top:13px;font-size:28px;line-height:32px;letter-spacing:-0.45px;color:#4d4d4d;">Служба доставки</div>
</div>
<svg style="left:2163px;top:513px" width="12" height="20" viewBox="0 0 12 20"><path d="M6 0 L6 18" stroke="#444" stroke-width="2"/><path d="M0.5 13 L6 20 L11.5 13 Z" fill="#444"/></svg>
<svg style="left:2516px;top:513px" width="12" height="20" viewBox="0 0 12 20"><path d="M6 0 L6 18" stroke="#444" stroke-width="2"/><path d="M0.5 13 L6 20 L11.5 13 Z" fill="#444"/></svg>
<svg style="left:1870px;top:862px" width="9" height="10" viewBox="0 0 9 10"><path d="M9 0 L9 10 L0 5 Z" fill="#c0c0c0"/></svg>
<div class="a" style="left:1898px;top:859px;width:1199px;height:16px;background:#d4d4d4;border-radius:8px"></div>
<div class="a" style="left:1898px;top:859px;width:851px;height:16px;background:#999;border-radius:8px"></div>
<svg style="left:3117px;top:862px" width="9" height="10" viewBox="0 0 9 10"><path d="M0 0 L0 10 L9 5 Z" fill="#555"/></svg>
<div class="a" style="left:1851px;top:891px;width:1293px;height:1px;background:repeating-linear-gradient(90deg,#fff 0 3px,#cfcfcf 3px 8px)"></div>
<div class="a" style="left:1852px;top:900px;width:339px;height:50px;border:2px solid #a3a3a3;border-radius:6px;background:linear-gradient(#fff 45%,#e9e9e9);box-shadow:0 2px 1px #cfcfcf;border-color:#c6c6c6;box-shadow:0 2px 1px #dcdcdc"></div>
<div class="t" style="left:2062px;top:910px;font-size:28px;line-height:32px;letter-spacing:-0.5px;color:#8f8f8f;">Печать</div>
<svg style="left:2167px;top:923px" width="10" height="6" viewBox="0 0 10 6"><path d="M0 0 L10 0 L5 6 Z" fill="#aaa"/></svg>
<div class="a" style="left:2209px;top:900px;width:358px;height:50px;border:2px solid #a3a3a3;border-radius:6px;background:linear-gradient(#fff 45%,#e9e9e9);box-shadow:0 2px 1px #cfcfcf;border-color:#c6c6c6;box-shadow:0 2px 1px #dcdcdc"></div>
<svg style="left:2223px;top:916px" width="32" height="20" viewBox="0 0 32 20"><rect x="0" y="0" width="19" height="15" fill="#bdbdbd"/><path d="M20 4 L27 4 L32 10 L32 15 L20 15 Z" fill="#c0b0ae"/><circle cx="6" cy="16" r="3.5" fill="#aaa" stroke="#fff" stroke-width="1.2"/><circle cx="25" cy="16" r="3.5" fill="#aaa" stroke="#fff" stroke-width="1.2"/></svg>
<div class="t" style="left:2269px;top:910px;font-size:28px;line-height:32px;letter-spacing:-0.5px;color:#8f8f8f;">Передать в доставку</div>
<svg style="left:2543px;top:923px" width="10" height="6" viewBox="0 0 10 6"><path d="M0 0 L10 0 L5 6 Z" fill="#aaa"/></svg>
<div class="a" style="left:3084px;top:900px;width:60px;height:50px;border:2px solid #a3a3a3;border-radius:6px;background:linear-gradient(#fff 45%,#e9e9e9);box-shadow:0 2px 1px #cfcfcf;border-color:#c6c6c6;box-shadow:0 2px 1px #dcdcdc"></div>
<svg style="left:3101px;top:913px" width="26" height="26" viewBox="0 0 26 26"><path d="M22.2 8.5 A10.3 10.3 0 1 0 23 17" fill="none" stroke="#a9c4a9" stroke-width="3"/><path d="M14.5 8.5 L25 1.5 L25 12 Z" fill="#a9c4a9"/></svg>
<div class="a" style="left:1851px;top:971px;width:1293px;height:899px;border:1px solid #9b9b9b;background:#fff"></div>
<div class="a" style="left:1852px;top:972px;width:1291px;height:119px;background:#f2f2f2"></div>
<div class="a" style="left:1852px;top:1091px;width:1291px;height:1px;background:#cdcdcd"></div>
<div class="a" style="left:2224px;top:972px;width:1px;height:119px;background:#cdcdcd"></div>
<div class="a" style="left:2225px;top:972px;width:1px;height:119px;background:#fafafa"></div>
<div class="a" style="left:2394px;top:972px;width:1px;height:119px;background:#cdcdcd"></div>
<div class="a" style="left:2395px;top:972px;width:1px;height:119px;background:#fafafa"></div>
<div class="a" style="left:2538px;top:972px;width:1px;height:119px;background:#cdcdcd"></div>
<div class="a" style="left:2539px;top:972px;width:1px;height:119px;background:#fafafa"></div>
<div class="a" style="left:2817px;top:972px;width:1px;height:119px;background:#cdcdcd"></div>
<div class="a" style="left:2818px;top:972px;width:1px;height:119px;background:#fafafa"></div>
<div class="a" style="left:3086px;top:972px;width:1px;height:119px;background:#cdcdcd"></div>
<div class="a" style="left:3087px;top:972px;width:1px;height:119px;background:#fafafa"></div>
<div class="a" style="left:2683px;top:1032px;width:1px;height:59px;background:#cdcdcd"></div>
<div class="a" style="left:2684px;top:1032px;width:1px;height:59px;background:#fafafa"></div>
<div class="a" style="left:2539px;top:1031px;width:278px;height:1px;background:#cdcdcd"></div>
<div class="a" style="left:2539px;top:1032px;width:278px;height:1px;background:#fafafa"></div>
<div class="a" style="left:3087px;top:1031px;width:56px;height:1px;background:#cdcdcd"></div>
<div class="a" style="left:3087px;top:1032px;width:56px;height:1px;background:#fafafa"></div>
<svg style="left:2183px;top:991px" width="12" height="20" viewBox="0 0 12 20"><path d="M6 0 L6 18" stroke="#444" stroke-width="2"/><path d="M0.5 13 L6 20 L11.5 13 Z" fill="#444"/></svg>
<div class="t" style="left:2241px;top:985px;font-size:28px;line-height:32px;letter-spacing:-0.45px;color:#4d4d4d;">Проверено</div>
<div class="t" style="left:2411px;top:985px;font-size:28px;line-height:32px;letter-spacing:-0.45px;color:#4d4d4d;">Отменен</div>
<div class="t" style="left:2556px;top:985px;font-size:28px;line-height:32px;letter-spacing:-0.45px;color:#4d4d4d;">Включен в отгруз…</div>
<div class="t" style="left:2833px;top:985px;font-size:28px;line-height:32px;letter-spacing:-0.45px;color:#4d4d4d;">Этикетка доступна</div>
<div class="t" style="left:2562px;top:1045px;font-size:28px;line-height:32px;letter-spacing:-0.45px;color:#4d4d4d;">Ус…</div>
<svg style="left:2642px;top:1051px" width="12" height="20" viewBox="0 0 12 20"><path d="M6 0 L6 18" stroke="#444" stroke-width="2"/><path d="M0.5 13 L6 20 L11.5 13 Z" fill="#444"/></svg>
<div class="t" style="left:2706px;top:1045px;font-size:28px;line-height:32px;letter-spacing:-0.45px;color:#4d4d4d;">О…</div>
<svg style="left:2776px;top:1050px" width="12" height="20" viewBox="0 0 12 20"><path d="M6 2 L6 20" stroke="#444" stroke-width="2"/><path d="M0.5 7 L6 0 L11.5 7 Z" fill="#444"/></svg>
<div class="a" style="left:3087px;top:972px;width:56px;height:119px;overflow:hidden">
<div class="t" style="left:20px;top:13px;font-size:28px;line-height:32px;letter-spacing:-0.45px;color:#4d4d4d;">Расход</div>
<div class="t" style="left:15px;top:73px;font-size:28px;line-height:32px;letter-spacing:-0.45px;color:#4d4d4d;">Заказ</div>
</div>
<svg style="left:1870px;top:1850px" width="9" height="10" viewBox="0 0 9 10"><path d="M9 0 L9 10 L0 5 Z" fill="#c0c0c0"/></svg>
<div class="a" style="left:1898px;top:1847px;width:1199px;height:16px;background:#d4d4d4;border-radius:8px"></div>
<div class="a" style="left:1898px;top:1847px;width:1021px;height:16px;background:#999;border-radius:8px"></div>
<svg style="left:3117px;top:1850px" width="9" height="10" viewBox="0 0 9 10"><path d="M0 0 L0 10 L9 5 Z" fill="#555"/></svg>
<div class="a" style="left:1164px;top:780px;width:934px;height:341px;border:4px solid #fc4141;background:#fff;box-shadow:0 3px 16px rgba(0,0,0,0.2)"></div>
<div class="a" style="left:1168px;top:784px;width:926px;height:2px;background:#9ca1a1"></div>
<div class="a" style="left:1168px;top:784px;width:2px;height:333px;background:#9ca1a1"></div>
<div class="a" style="left:2093px;top:784px;width:1px;height:333px;background:#b8bcbc"></div>
<div class="t" style="left:1194px;top:805px;font-size:38px;line-height:44px;letter-spacing:-0.6px;color:#000;">Укажите параметры создания отгрузки</div>
<svg style="left:1925px;top:814.0px" width="8" height="8" viewBox="0 0 8 8"><circle cx="4" cy="4" r="3.2" fill="#6e6e6e"/></svg>
<svg style="left:1925px;top:822.5px" width="8" height="8" viewBox="0 0 8 8"><circle cx="4" cy="4" r="3.2" fill="#6e6e6e"/></svg>
<svg style="left:1925px;top:831.0px" width="8" height="8" viewBox="0 0 8 8"><circle cx="4" cy="4" r="3.2" fill="#6e6e6e"/></svg>
<svg style="left:1981px;top:816px" width="20" height="20" viewBox="0 0 20 20"><rect x="1.2" y="1.2" width="17.6" height="17.6" fill="none" stroke="#333" stroke-width="2.2"/></svg>
<svg style="left:2043px;top:816px" width="20" height="20" viewBox="0 0 20 20"><path d="M1 1 L19 19 M19 1 L1 19" stroke="#333" stroke-width="2.2"/></svg>
<div class="t" style="left:1195px;top:878px;font-size:28px;line-height:32px;letter-spacing:-0.5px;color:#4d4d4d;">Склад отгрузки:</div>
<div class="a" style="left:1422px;top:866px;width:639px;height:55px;border:2px solid #f6c21c;background:#fff"></div>
<div class="a" style="left:2015px;top:878px;width:2px;height:40px;background:#9b9b9b"></div>
<svg style="left:2031px;top:889px" width="10" height="7" viewBox="0 0 10 7"><path d="M0 0 L10 0 L5 6 Z" fill="#444"/></svg>
<div class="t" style="left:1431px;top:878px;font-size:28px;line-height:32px;letter-spacing:-0.45px;color:#333;">Склад Поставщик (3172)</div>
<div class="a" style="left:1741px;top:878px;width:2px;height:31px;background:#111"></div>
<div class="t" style="left:1195px;top:945px;font-size:28px;line-height:32px;letter-spacing:-0.5px;color:#a3a3a3;">Количество мест:</div>
<div class="a" style="left:1425px;top:936px;width:162px;height:49px;border:2px solid #d2d2d2;border-radius:7px;background:#fff"></div>
<div class="a" style="left:1543px;top:938px;width:2px;height:45px;background:#d2d2d2"></div>
<div class="a" style="left:1546px;top:960px;width:39px;height:2px;background:#d6d6d6"></div>
<svg style="left:1561px;top:948px" width="8" height="5" viewBox="0 0 8 5"><path d="M0 5 L8 5 L4 0 Z" fill="#aaa"/></svg>
<svg style="left:1561px;top:969px" width="8" height="5" viewBox="0 0 8 5"><path d="M0 0 L8 0 L4 5 Z" fill="#aaa"/></svg>
<div class="t" style="left:1524px;top:945px;font-size:28px;line-height:32px;letter-spacing:0px;color:#777;">0</div>
<div class="t" style="left:1606px;top:945px;font-size:28px;line-height:32px;letter-spacing:-0.5px;color:#a3a3a3;">(при доверительной отгрузке)</div>
<div class="a" style="left:1194px;top:1025px;width:260px;height:50px;border:2px solid #a3a3a3;border-radius:6px;background:linear-gradient(#fff 45%,#e9e9e9);box-shadow:0 2px 1px #cfcfcf;"></div>
<svg style="left:1200px;top:1025px" width="60" height="50" viewBox="0 0 60 50"><g transform="translate(-1200 -1025)"><path d="M1209.1 1048.7 L1216.4 1042 L1227.4 1053.2 L1246.5 1034.1 L1253.7 1041.2 L1227.4 1067.2 Z" fill="#3bc655" stroke="#2e9d3c" stroke-width="1.2" stroke-linejoin="round"/></g></svg>
<div class="t" style="left:1306px;top:1035px;font-size:28px;line-height:32px;letter-spacing:-0.5px;color:#444;">Готово</div>
<div class="a" style="left:1798px;top:1025px;width:260px;height:50px;border:2px solid #a3a3a3;border-radius:6px;background:linear-gradient(#fff 45%,#e9e9e9);box-shadow:0 2px 1px #cfcfcf;"></div>
<svg style="left:1810px;top:1025px" width="50" height="50" viewBox="0 0 50 50"><g transform="translate(-1810 -1025)"><path d="M1823.8 1038.6 L1847.2 1062.1 M1847.2 1038.6 L1823.8 1062.1" stroke="#ff2d33" stroke-width="8" stroke-linecap="round"/></g></svg>
<div class="t" style="left:1890px;top:1035px;font-size:28px;line-height:32px;letter-spacing:-0.5px;color:#444;">Отменить</div>
</body></html>
